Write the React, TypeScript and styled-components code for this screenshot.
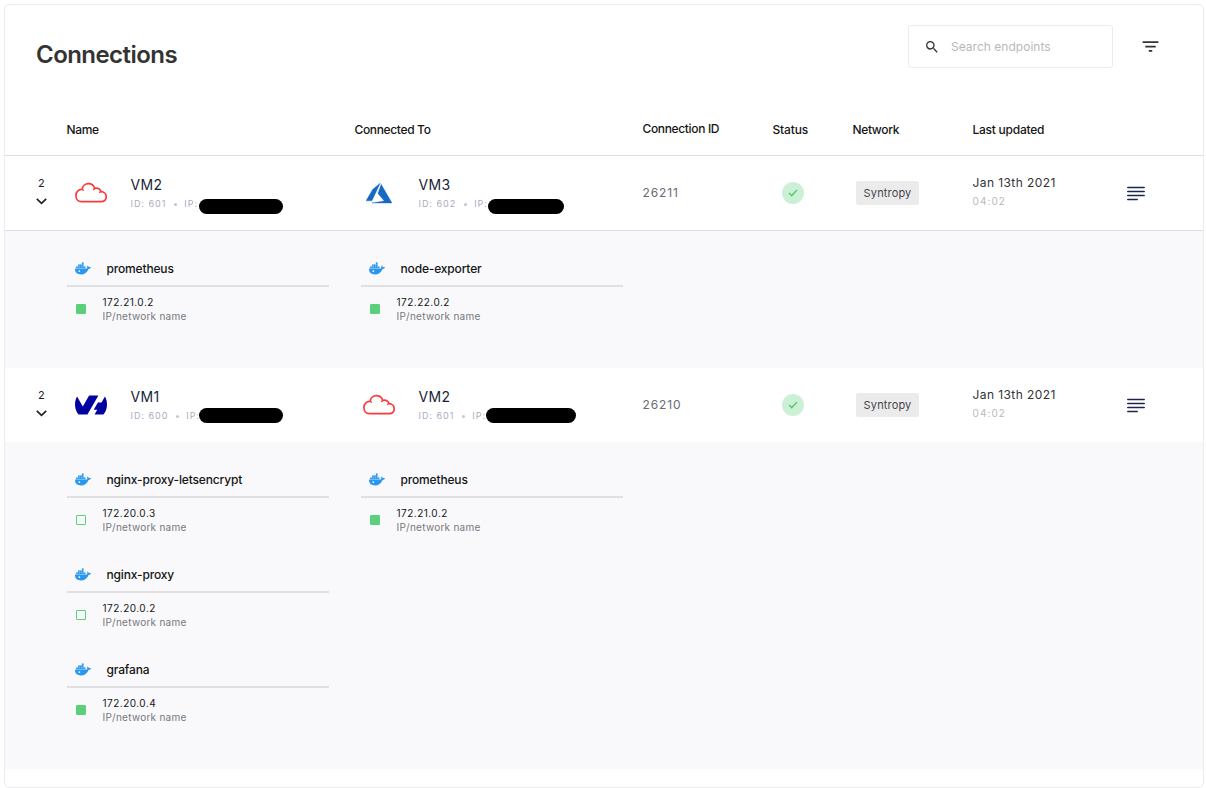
import React from "react";
import styled, { createGlobalStyle } from "styled-components";
import { MdFilterList, MdSearch } from "react-icons/md";
import { SiOvh } from "react-icons/si";

const GlobalStyle = createGlobalStyle`
  *, *::before, *::after { box-sizing: border-box; }
  body {
    margin: 0;
    background: #fff;
    color: #1c1c1f;
    font-family: Inter, "Liberation Sans", Arial, sans-serif;
  }
`;

const Page = styled.main`
  padding: 4px 2px 0 4px;
  height: 788px;
  overflow: hidden;
`;

const Card = styled.section`
  width: 1200px;
  height: 784px;
  border: 1px solid #ebebf2;
  border-radius: 5px;
  overflow: hidden;
`;

const Toolbar = styled.header`
  display: flex;
  align-items: flex-start;
  height: 100px;
  padding: 20px 42px 0 31px;
`;

const Title = styled.h1`
  flex: 1;
  margin: 15px 0 0;
  font-size: 24px;
  line-height: 30px;
  font-weight: 600;
  letter-spacing: -0.55px;
  color: #333;
`;

const SearchBox = styled.label`
  display: flex;
  align-items: center;
  gap: 11.5px;
  width: 205px;
  height: 43px;
  padding: 0 15px;
  border: 1px solid #ebebf4;
  border-radius: 3px;
  color: #333;
  svg { flex: none; }
`;

const SearchInput = styled.input`
  width: 130px;
  padding: 0;
  border: 0;
  outline: 0;
  background: none;
  font: 12px/16px Inter, "Liberation Sans", Arial, sans-serif;
  letter-spacing: 0.02px;
  &::placeholder { color: #b9b9bb; opacity: 1; }
`;

const FilterButton = styled.button`
  display: flex;
  margin: 11px 0 0 27.5px;
  padding: 0;
  border: 0;
  background: none;
  color: #333;
`;

const GridRow = styled.div`
  display: grid;
  grid-template-columns: 61.5px 288px 288px 130px 80px 120px 154.5px 1fr;
`;

const HeadRow = styled(GridRow)`
  height: 51px;
  border-bottom: 1px solid #dedee0;
  font-size: 12px;
  font-weight: 500;
  color: #151515;
`;

const HeadCell = styled.span<{ $lift?: boolean; $spacing?: number }>`
  line-height: ${(p) => (p.$lift ? 48 : 50)}px;
  letter-spacing: ${(p) => p.$spacing ?? -0.35}px;
`;

const ConnectionRow = styled(GridRow)<{ $divided: boolean }>`
  height: ${(p) => (p.$divided ? 75 : 74)}px;
  border-bottom: ${(p) => (p.$divided ? "1px solid #dedee0" : "0")};
`;

const Expander = styled.div`
  display: flex;
  flex-direction: column;
  align-items: center;
  padding: 20px 0 0 11px;
  font-size: 11px;
  line-height: 14px;
  color: #222;
  svg { margin-top: 8px; }
`;

const Endpoint = styled.div`
  display: flex;
`;

const LogoSlot = styled.div`
  display: flex;
  align-items: center;
  justify-content: center;
  width: 32px;
  height: 32px;
  margin: 21px 24px 0 8px;
  svg { flex: none; }
`;

const EndpointText = styled.div`
  position: relative;
  padding-top: 21px;
`;

const EndpointName = styled.div`
  font-size: 14px;
  line-height: 16px;
  letter-spacing: 0.4px;
  color: #1a1f36;
`;

const EndpointMeta = styled.div`
  display: flex;
  align-items: center;
  margin-top: 6px;
  font-size: 9px;
  line-height: 10px;
  letter-spacing: 0.98px;
  color: #a6aec4;
  white-space: pre;
`;

const Dot = styled.i`
  width: 3px;
  height: 3px;
  margin: 0 7px 0 8px;
  border-radius: 50%;
  background: #c6c6cc;
`;

const Redaction = styled.span<{ $left: number; $top: number; $width: number }>`
  position: absolute;
  top: ${(p) => p.$top}px;
  left: ${(p) => p.$left}px;
  width: ${(p) => p.$width}px;
  height: 15.3px;
  border-radius: 8px;
  background: #000;
`;

const ConnectionId = styled.div`
  padding-top: 29px;
  font-size: 12px;
  line-height: 16px;
  letter-spacing: 0.9px;
  color: #6b6b70;
`;

const Status = styled.div`
  display: flex;
  align-items: center;
  justify-content: center;
  width: 22px;
  height: 22px;
  margin: 26px 0 0 9.5px;
  border-radius: 50%;
  background: #ccf0d5;
`;

const NetworkTag = styled.div`
  justify-self: start;
  width: 63px;
  height: 24px;
  margin: 25px 0 0 3.5px;
  border-radius: 2px;
  background: #ebebeb;
  font-size: 11px;
  line-height: 24px;
  letter-spacing: 0.15px;
  text-align: center;
  color: #46464c;
`;

const Updated = styled.div`
  padding-top: 19px;
  font-size: 12px;
  line-height: 16px;
  letter-spacing: 0.42px;
  color: #333;
`;

const UpdatedTime = styled.div`
  margin-top: 3px;
  font-size: 10px;
  line-height: 14px;
  letter-spacing: 1.1px;
  color: #b9b9bd;
`;

const MenuButton = styled.button`
  display: flex;
  align-self: start;
  margin: 30px 0 0;
  padding: 0;
  border: 0;
  background: none;
`;

const Services = styled.div`
  display: flex;
  gap: 32px;
  padding: 24px 0 18px 62px;
  background: #f9f9fb;
`;

const ServiceColumn = styled.div`
  width: 262px;
`;

const Service = styled.div`
  height: 95px;
`;

const ServiceHead = styled.div`
  display: flex;
  align-items: center;
  gap: 15.5px;
  height: 32px;
  padding: 0 0 3px 8px;
  border-bottom: 2px solid #e0e0e3;
  font-size: 12px;
  font-weight: 500;
  letter-spacing: -0.16px;
  color: #151515;
`;

const Address = styled.div`
  display: flex;
  padding: 8px 0 0 9px;
  font-size: 10px;
  line-height: 14px;
`;

const Indicator = styled.i<{ $filled: boolean }>`
  width: 10px;
  height: 10px;
  margin: 9px 16.5px 0 0;
  border: 1px solid #5bd07a;
  border-radius: 1px;
  background: ${(p) => (p.$filled ? "#5bd07a" : "transparent")};
`;

const Ip = styled.div`
  letter-spacing: 0.48px;
  color: #151515;
`;

const IpLabel = styled.div`
  letter-spacing: 0.26px;
  color: #77777c;
`;

const CloudLogo = () => (
  <svg width="34" height="22" viewBox="0 0 34 22" fill="none" stroke="#fb3a3d" strokeWidth="1.7" strokeLinecap="round" strokeLinejoin="round">
    <path d="M7.3 19.6H27C30.2 19.6 32.2 17.5 32.2 14.7C32.2 11.8 30 9.8 27 9.7C26.6 7 23.7 5.5 20.9 6.4C19.7 3.5 17.4 1.7 14.5 1.7C11 1.7 8.5 4.1 8.2 7.3C4.4 7.2 1.9 10 1.9 13.5C1.9 17 4.1 19.6 7.3 19.6Z" />
    <path d="M8.2 7.3Q8.9 7.5 9.3 8.3M20.9 6.4Q20.1 6.8 19.6 7.5M27 9.7Q26.1 9.8 25.6 10.3" strokeWidth="1.3" />
  </svg>
);

const AzureLogo = () => (
  <svg width="26" height="26" viewBox="0 0 24 24" fill="#1769c4" stroke="#1769c4" strokeWidth=".3">
    <path d="M5.483 21.3H24L14.025 4.013l-3.038 8.347 5.836 6.938L5.483 21.3zM13.23 2.7L6.105 8.677 0 19.253h5.505v.014L13.23 2.7z" />
  </svg>
);

const DockerIcon = () => (
  <svg width="16" height="13" viewBox="0 0 16 13">
    <path
      fill="#2a97ee"
      d="M0 6.6H11.2C11.9 6.6 12.3 6.3 12.4 6.1C11.9 5.2 12.1 4.2 12.7 3.5C13.4 4 13.8 4.6 13.8 5.2C14.6 5 15.4 5.1 16 5.5C15.6 6.4 14.7 6.9 13.6 6.9C12.2 10.4 9.7 12.4 5.9 12.4C2.1 12.4 -.2 10.4 0 6.6Z"
    />
    <path
      fill="#2a97ee"
      d="M1.2 4.5H2.8V6.1H1.2ZM3.1 4.5H4.7V6.1H3.1ZM5 4.5H6.6V6.1H5ZM6.9 4.5H8.5V6.1H6.9ZM8.8 4.5H10.4V6.1H8.8ZM3.1 2.6H4.7V4.2H3.1ZM5 2.6H6.6V4.2H5ZM6.9 2.6H8.5V4.2H6.9ZM6.9 .6H8.5V2.3H6.9Z"
    />
    <path fill="#2a97ee" opacity=".4" d="M1.2 4.5H3.1V2.6H6.9V.6H8.5V4.5H10.4V6.6H1.2Z" />
    <circle cx="4.3" cy="9.1" r=".9" fill="#fff" />
  </svg>
);

const Chevron = () => (
  <svg width="11" height="7" viewBox="0 0 11 7" fill="none" stroke="#222" strokeWidth="1.7">
    <path d="M.8 .9L5.5 5.4L10.2 .9" />
  </svg>
);

const Check = () => (
  <svg width="10" height="8" viewBox="0 0 10 8" fill="none" stroke="#56cc76" strokeWidth="1.5">
    <path d="M1 4L3.7 6.6L9 1" />
  </svg>
);

const MenuLines = () => (
  <svg width="18" height="15" viewBox="0 0 18 15" stroke="#1b2350" strokeWidth="1.5" strokeLinecap="round">
    <path d="M.8 1.4H17.2M.8 5.4H17.2M.8 9.4H17.2M.8 13.4H10.2" />
  </svg>
);

const logos = {
  cloud: <CloudLogo />,
  azure: <AzureLogo />,
  ovh: <SiOvh size={32} color="#0202a0" />,
};

type EndpointData = {
  name: string;
  id: number;
  logo: keyof typeof logos;
  maskLeft: number;
  maskTop: number;
  maskWidth: number;
};

type ServiceData = { name: string; ip: string; active: boolean };

type Connection = {
  id: string;
  from: EndpointData;
  to: EndpointData;
  fromServices: ServiceData[];
  toServices: ServiceData[];
};

const connections: Connection[] = [
  {
    id: "26211",
    from: { name: "VM2", id: 601, logo: "cloud", maskLeft: 68.2, maskTop: 43, maskWidth: 84 },
    to: { name: "VM3", id: 602, logo: "azure", maskLeft: 69.6, maskTop: 43, maskWidth: 76 },
    fromServices: [{ name: "prometheus", ip: "172.21.0.2", active: true }],
    toServices: [{ name: "node-exporter", ip: "172.22.0.2", active: true }],
  },
  {
    id: "26210",
    from: { name: "VM1", id: 600, logo: "ovh", maskLeft: 68.2, maskTop: 39.7, maskWidth: 84 },
    to: { name: "VM2", id: 601, logo: "cloud", maskLeft: 67, maskTop: 39.7, maskWidth: 90.5 },
    fromServices: [
      { name: "nginx-proxy-letsencrypt", ip: "172.20.0.3", active: false },
      { name: "nginx-proxy", ip: "172.20.0.2", active: false },
      { name: "grafana", ip: "172.20.0.4", active: true },
    ],
    toServices: [{ name: "prometheus", ip: "172.21.0.2", active: true }],
  },
];

const EndpointCell = ({ data }: { data: EndpointData }) => (
  <Endpoint>
    <LogoSlot>{logos[data.logo]}</LogoSlot>
    <EndpointText>
      <EndpointName>{data.name}</EndpointName>
      <EndpointMeta>
        <span>ID: {data.id}</span>
        <Dot />
        <span>IP:</span>
      </EndpointMeta>
      <Redaction $left={data.maskLeft} $top={data.maskTop} $width={data.maskWidth} />
    </EndpointText>
  </Endpoint>
);

const ServiceList = ({ items }: { items: ServiceData[] }) => (
  <ServiceColumn>
    {items.map((s) => (
      <Service key={s.name}>
        <ServiceHead>
          <DockerIcon />
          <span>{s.name}</span>
        </ServiceHead>
        <Address>
          <Indicator $filled={s.active} />
          <div>
            <Ip>{s.ip}</Ip>
            <IpLabel>IP/network name</IpLabel>
          </div>
        </Address>
      </Service>
    ))}
  </ServiceColumn>
);

export default function App() {
  return (
    <>
      <GlobalStyle />
      <Page>
        <Card>
          <Toolbar>
            <Title>Connections</Title>
            <SearchBox>
              <MdSearch size={16} />
              <SearchInput placeholder="Search endpoints" />
            </SearchBox>
            <FilterButton aria-label="Filter">
              <MdFilterList size={21} />
            </FilterButton>
          </Toolbar>
          <HeadRow>
            <span />
            <HeadCell>Name</HeadCell>
            <HeadCell>Connected To</HeadCell>
            <HeadCell $lift>Connection ID</HeadCell>
            <HeadCell $spacing={-0.15}>Status</HeadCell>
            <HeadCell>Network</HeadCell>
            <HeadCell $spacing={-0.25}>Last updated</HeadCell>
          </HeadRow>
          {connections.map((c, i) => (
            <React.Fragment key={c.id}>
              <ConnectionRow $divided={i === 0}>
                <Expander>
                  2
                  <Chevron />
                </Expander>
                <EndpointCell data={c.from} />
                <EndpointCell data={c.to} />
                <ConnectionId>{c.id}</ConnectionId>
                <Status>
                  <Check />
                </Status>
                <NetworkTag>Syntropy</NetworkTag>
                <Updated>
                  Jan 13th 2021
                  <UpdatedTime>04:02</UpdatedTime>
                </Updated>
                <MenuButton aria-label="Details">
                  <MenuLines />
                </MenuButton>
              </ConnectionRow>
              <Services>
                <ServiceList items={c.fromServices} />
                <ServiceList items={c.toServices} />
              </Services>
            </React.Fragment>
          ))}
        </Card>
      </Page>
    </>
  );
}
